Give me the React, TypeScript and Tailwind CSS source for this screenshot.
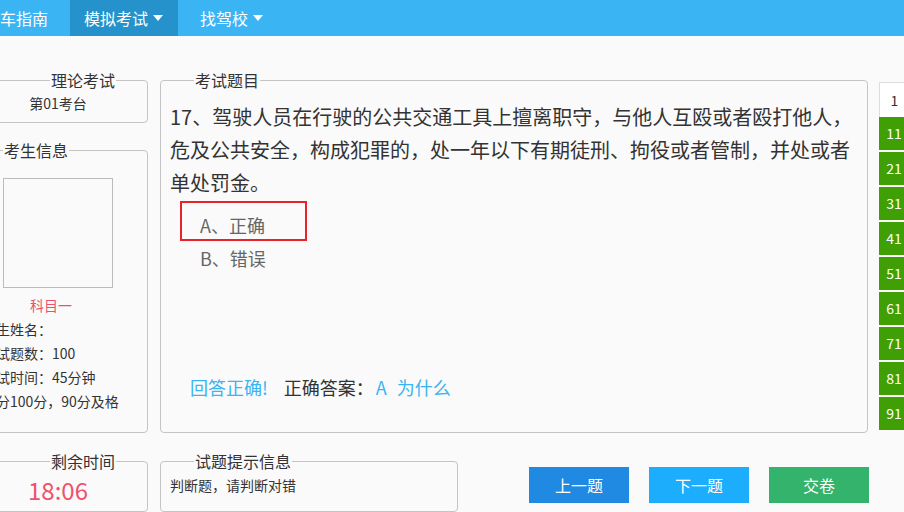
import { ReactNode } from 'react';

// ================================================================
// SMALL PIECES
// ================================================================

function Caret() {
  return (
    <svg width="10" height="6" viewBox="0 0 10 6" className="ml-[5px]">
      <polygon points="0,0 10,0 5,6" fill="#ffffff" />
    </svg>
  );
}

function Box({
  title,
  legendClass,
  className,
  children,
}: {
  title: string;
  legendClass: string;
  className?: string;
  children: ReactNode;
}) {
  return (
    <fieldset className={`shrink-0 border border-[#c4c4c4] rounded-[4px] ${className ?? ''}`}>
      <legend className={`px-[1px] text-[16px] leading-[20px] text-[#333] ${legendClass}`}>{title}</legend>
      {children}
    </fieldset>
  );
}

const navItems = [
  { label: '驾车指南', active: false, caret: false },
  { label: '模拟考试', active: true, caret: true },
  { label: '找驾校', active: false, caret: true },
];

const numbers = [11, 21, 31, 41, 51, 61, 71, 81, 91];

const infoLines = ['考生姓名：', '考试题数：100', '考试时间：45分钟', '满分100分，90分及格'];

// ================================================================
// PAGE
// ================================================================

export default function App() {
  return (
    <div className="w-[904px] h-[512px] overflow-hidden bg-[#fafafa] font-['Noto_Sans_CJK_SC','Microsoft_YaHei',sans-serif] text-[#333]">
      {/* Top nav */}
      <div className="h-9 bg-[#3bb4f4]">
        <div className="flex gap-2 ml-[-30px] h-full">
          {navItems.map((item) => (
            <div
              key={item.label}
              className={`flex items-center shrink-0 pl-[14px] ${item.caret ? 'pr-[15px]' : 'pr-[14px]'} text-[16px] text-white ${
                item.active ? 'bg-[#2592cc]' : ''
              }`}
            >
              {item.label}
              {item.caret && <Caret />}
            </div>
          ))}
        </div>
      </div>

      {/* Main row */}
      <div className="flex ml-[-32px] pt-[34px]">
        {/* Left column */}
        <div className="w-[180px] shrink-0 flex flex-col">
          <Box title="理论考试" legendClass="ml-[81px]" className="h-[53px]">
            <div className="text-center text-[14px] leading-[20px] pt-[3px]">第01考台</div>
          </Box>
          <Box title="考生信息" legendClass="ml-[34px]" className="h-[293px] mt-[17px]">
            <div className="ml-[34px] mt-[18px] w-[110px] h-[110px] border border-[#bbb]" />
            <div className="ml-[61px] mt-[5px] text-[14px] leading-[24px] text-[#f0506e]">科目一</div>
            <div className="pl-[13px] text-[14px] leading-[24px] whitespace-nowrap">
              {infoLines.map((l) => (
                <div key={l}>{l}</div>
              ))}
            </div>
          </Box>
        </div>

        {/* Question */}
        <Box title="考试题目" legendClass="ml-[24px]" className="ml-[12px] w-[708px] h-[363px] px-[9px]">
          <div className="h-[342px] flex flex-col pt-[10px]">
            <p className="text-[20px] leading-[33px] text-[#333]">
              17、驾驶人员在行驶的公共交通工具上擅离职守，与他人互殴或者殴打他人，危及公共安全，构成犯罪的，处一年以下有期徒刑、拘役或者管制，并处或者单处罚金。
            </p>
            <div className="ml-[10px] mt-[2px] w-[127px] h-[40px] border-2 border-[#e8212b] pl-[18px] pt-[10px] text-[18px] leading-[24px] text-[#666]">
              A、正确
            </div>
            <div className="ml-[30px] pt-[5px] text-[18px] leading-[24px] text-[#666]">B、错误</div>
            <div className="mt-auto mb-[33px] ml-[20px] flex items-center text-[18px] leading-[24px] whitespace-nowrap">
              <span className="text-[#3bb4f2]">回答正确!</span>
              <span className="ml-[16px] text-[#333]">正确答案：</span>
              <span className="ml-[2px] text-[#3bb4f2]">A</span>
              <span className="ml-[10px] text-[#3bb4f2]">为什么</span>
            </div>
          </div>
        </Box>

        {/* Number column */}
        <div className="ml-[11px] mt-[12px] w-[30px] shrink-0 text-[14px]">
          <div className="h-[35px] bg-white border-l border-t border-[#ddd] flex items-center justify-center text-[#333]">
            1
          </div>
          <div className="flex flex-col gap-[2px]">
            {numbers.map((n) => (
              <div key={n} className="h-[33px] bg-[#3f9f04] text-white flex items-center justify-center">
                {n}
              </div>
            ))}
          </div>
        </div>
      </div>

      {/* Bottom row */}
      <div className="flex ml-[-32px] mt-[18px]">
        <Box title="剩余时间" legendClass="ml-[81px]" className="w-[180px] h-[61px]">
          <div className="text-center pt-[4px] text-[24px] leading-[30px] text-[#f0506e]">18:06</div>
        </Box>
        <Box title="试题提示信息" legendClass="ml-[24px]" className="ml-[12px] w-[298px] h-[61px] px-[9px]">
          <div className="pt-[4px] text-[14px] leading-[20px]">判断题，请判断对错</div>
        </Box>
        <div className="flex shrink-0 gap-5 ml-[71px] mt-[16px] h-9">
          <button className="w-[100px] h-9 bg-[#2089e2] text-white text-[16px]">上一题</button>
          <button className="w-[100px] h-9 bg-[#1caefc] text-white text-[16px]">下一题</button>
          <button className="w-[100px] h-9 bg-[#33b36c] text-white text-[16px]">交卷</button>
        </div>
      </div>
    </div>
  );
}
